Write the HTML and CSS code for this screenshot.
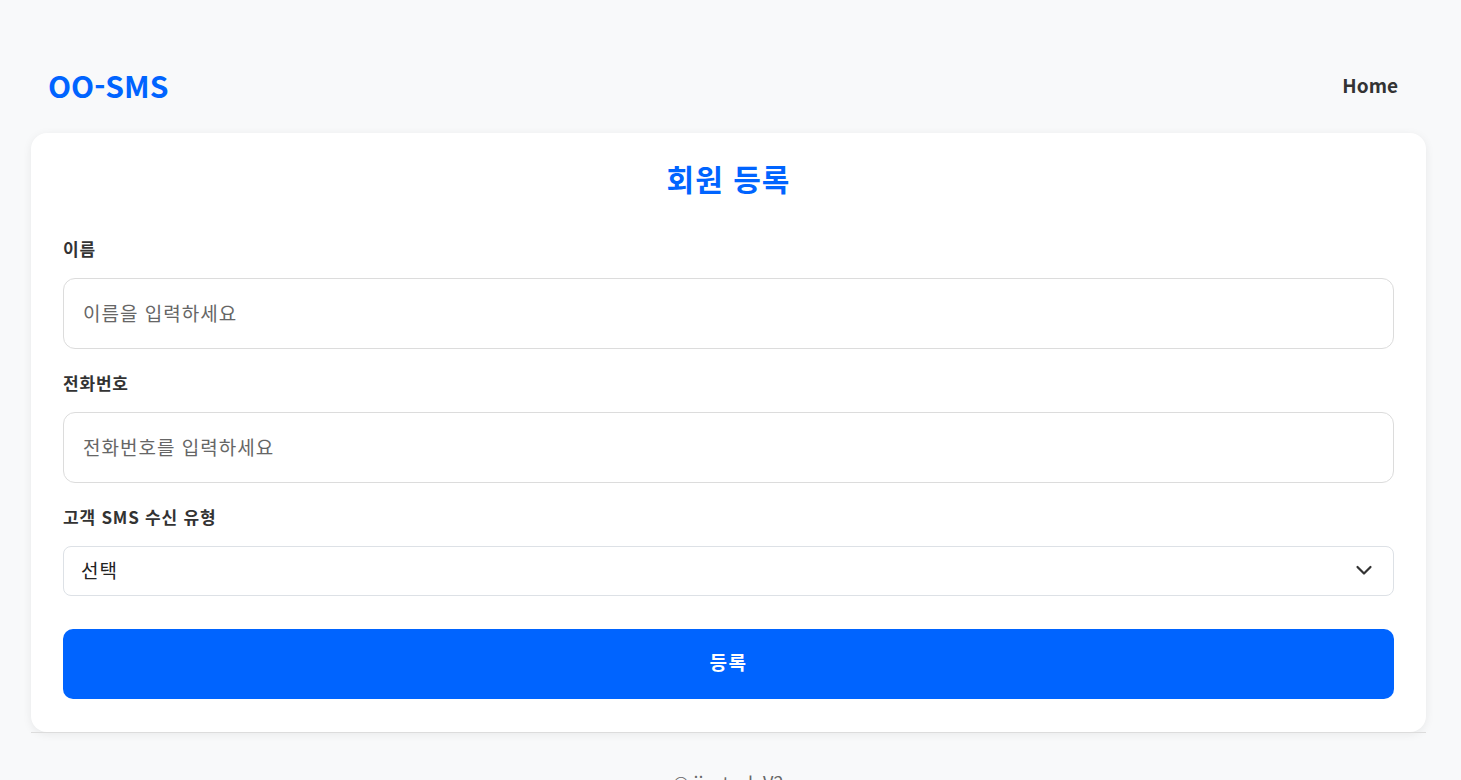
FILE: index.html
```html
<!DOCTYPE html>
<html lang="ko">
<head>
<meta charset="utf-8">
<title>OO-SMS 회원 등록</title>
<link rel="stylesheet" href="styles.css">
</head>
<body>
<div class="wrap">
  <header class="header">
    <a class="logo" href="#">OO-SMS</a>
    <nav class="nav"><a href="#">Home</a></nav>
  </header>
  <main class="card">
    <h1 class="title">회원 등록</h1>
    <form class="form">
      <div class="field">
        <label class="label" for="name">이름</label>
        <input class="input" id="name" type="text" placeholder="이름을 입력하세요">
      </div>
      <div class="field">
        <label class="label" for="phone">전화번호</label>
        <input class="input" id="phone" type="text" placeholder="전화번호를 입력하세요">
      </div>
      <div class="field">
        <label class="label" for="type">고객 SMS 수신 유형</label>
        <div class="select-wrap">
          <select class="select" id="type">
            <option>선택</option>
          </select>
          <svg class="chev" width="18" height="18" viewBox="0 0 18 18" aria-hidden="true"><path d="M2.5 6l6.5 6.5L15.5 6" fill="none" stroke="#333" stroke-width="2.2" stroke-linecap="round" stroke-linejoin="round"/></svg>
        </div>
      </div>
      <button class="btn" type="button">등록</button>
    </form>
  </main>
  <footer class="footer">© jinstack V2</footer>
</div>
</body>
</html>
```

FILE: styles.css
```css
* { box-sizing: border-box; }
html, body { margin: 0; padding: 0; }
body {
  background: #f8f9fa;
  font-family: "Noto Sans CJK KR", "Noto Sans", sans-serif;
  color: #333;
}
.wrap {
  padding: 0 35px 0 31px;
}
.header {
  height: 133px;
  padding: 36px 28px 0 17px;
  display: flex;
  align-items: center;
  justify-content: space-between;
}
.logo {
  font-size: 30px;
  font-weight: 700;
  color: #0064ff;
  text-decoration: none;
}
.nav a {
  font-size: 19px;
  font-weight: 700;
  color: #333;
  text-decoration: none;
}
.card {
  background: #fff;
  border-radius: 16px;
  box-shadow: 0 2px 10px rgba(0, 0, 0, 0.07);
  padding: 24px 32px 33px;
}
.title {
  margin: 0 0 38px;
  text-align: center;
  font-size: 30px;
  font-weight: 700;
  color: #0064ff;
  line-height: 42px;
  letter-spacing: 1px;
}
.form {
  display: flex;
  flex-direction: column;
  gap: 22px;
}
.field {
  display: flex;
  flex-direction: column;
  gap: 17px;
}
.label {
  font-size: 17px;
  font-weight: 700;
  color: #333;
  line-height: 24px;
  letter-spacing: 0.8px;
}
.input {
  height: 71px;
  border: 1px solid #dcdcdc;
  border-radius: 12px;
  padding: 0 19px 2px;
  font-family: inherit;
  font-size: 19px;
  letter-spacing: 1px;
  color: #333;
  background: #fff;
  outline: none;
}
.input::placeholder { color: #666; }
.select-wrap {
  position: relative;
}
.select {
  width: 100%;
  height: 50px;
  border: 1px solid #dde1e6;
  border-radius: 8px;
  padding: 0 17px 4px;
  font-family: inherit;
  font-size: 19px;
  letter-spacing: 1px;
  color: #222;
  background: #fff;
  appearance: none;
  -webkit-appearance: none;
  outline: none;
}
.chev {
  position: absolute;
  right: 21px;
  top: 15px;
  pointer-events: none;
}
.btn {
  margin-top: 11px;
  height: 70px;
  border: 0;
  border-radius: 10px;
  padding: 0 0 5px;
  background: #0064ff;
  color: #fff;
  font-family: inherit;
  font-size: 19px;
  font-weight: 700;
  letter-spacing: 1.5px;
}
.footer {
  border-top: 1px solid #dcdcdc;
  padding-top: 36px;
  text-align: center;
  font-size: 18px;
  color: #666;
}
```
